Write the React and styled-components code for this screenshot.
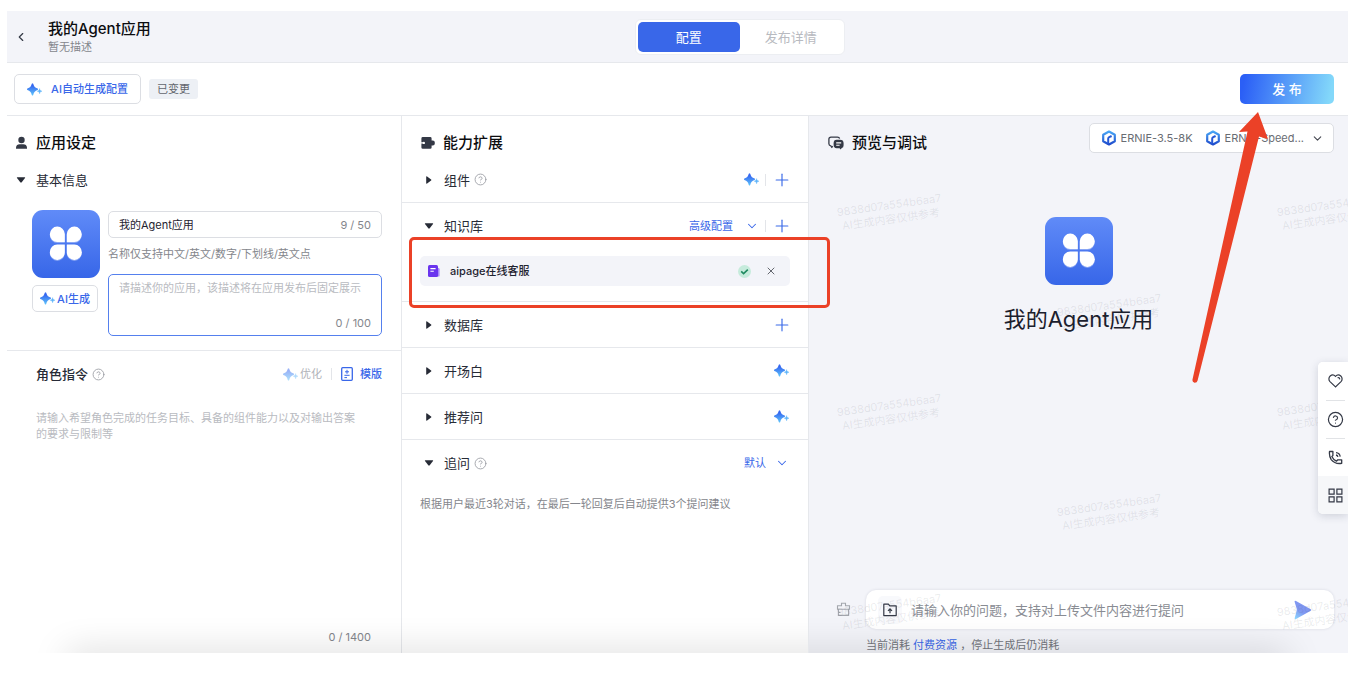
import React from "react";
import styled, { createGlobalStyle, css } from "styled-components";
import { Plus, ChevronDown, ChevronLeft, X, CircleHelp } from "lucide-react";

const GlobalStyle = createGlobalStyle`
  * {
    box-sizing: border-box;
  }
  body {
    margin: 0;
    background: #fff;
    color: #1f2330;
    font-family: Inter, "Noto Sans CJK SC", sans-serif;
    font-size: 11px;
    line-height: 16px;
  }
  button, input, textarea, select {
    margin: 0;
    padding: 0;
    border: 0;
    background: none;
    color: inherit;
    font: inherit;
    outline: none;
  }
  button, select {
    cursor: pointer;
  }
  h1, h2, h3, p {
    margin: 0;
  }
  svg {
    display: block;
    flex: none;
  }
`;

const Page = styled.div`
  position: relative;
  display: flex;
  min-height: 100vh;
  padding: 11px 24px 25px 7px;
`;

const Shell = styled.div`
  position: relative;
  display: flex;
  flex: 1;
  flex-direction: column;
  min-width: 0;
  overflow: hidden;
`;

const Header = styled.header`
  display: grid;
  grid-template-columns: 629fr auto 504fr;
  align-items: center;
  height: 52px;
  background: #f3f4f9;
  border-bottom: 1px solid #e6e8ec;
`;

const Brand = styled.div`
  display: flex;
  align-items: center;
  gap: 20px;
  padding-left: 7px;
`;

const IconButton = styled.button`
  display: flex;
  align-items: center;
  justify-content: center;
  color: ${(props) => props.$color || "#3b6be8"};
`;

const AppName = styled.h1`
  font-size: 15px;
  font-weight: 500;
  line-height: 20px;
  color: #0c0d10;
`;

const Muted = styled.p`
  color: #84868c;
`;

const Tabs = styled.nav`
  display: flex;
  padding: 2px;
  background: #fff;
  border: 1px solid #eceef2;
  border-radius: 6px;
`;

const Tab = styled.button`
  width: 102px;
  height: 30px;
  border-radius: 5px;
  font-size: 13px;
  color: ${(props) => (props.$active ? "#fff" : "#b8bac0")};
  background: ${(props) => (props.$active ? "#3967e9" : "transparent")};
`;

const Toolbar = styled.div`
  display: flex;
  align-items: center;
  gap: 8px;
  height: 53px;
  padding: 0 14px 0 7px;
  border-bottom: 1px solid #e6e8ec;
`;

const OutlineButton = styled.button`
  display: flex;
  align-items: center;
  justify-content: center;
  gap: ${(props) => (props.$small ? "2px" : "9px")};
  width: ${(props) => (props.$small ? "66px" : "127px")};
  height: ${(props) => (props.$small ? "27px" : "30px")};
  border: 1px solid #dcdee3;
  border-radius: 5px;
  color: #3967e9;
  font-weight: 500;
`;

const Tag = styled.span`
  padding: 2px 8px;
  border-radius: 3px;
  background: #edf0f5;
  color: #63666d;
`;

const PublishButton = styled.button`
  width: 94px;
  height: 30px;
  margin-left: auto;
  border-radius: 5px;
  background: linear-gradient(100deg, #2b5ff6 5%, #83d8fa 95%);
  color: #fff;
  font-size: 13px;
  font-weight: 500;
  white-space: pre;
`;

const Columns = styled.main`
  display: grid;
  flex: 1;
  grid-template-columns: 395fr 407fr 539fr;
`;

const Column = styled.section`
  display: flex;
  flex-direction: column;
  min-width: 0;
  border-right: 1px solid #e6e8ec;
`;

const ColumnTitle = styled.h2`
  display: flex;
  align-items: center;
  gap: 8px;
  height: 41px;
  padding: 12px 0 0 ${(props) => props.$indent || "8px"};
  font-size: 15px;
  font-weight: 500;
  color: #0c0d10;
`;

const Row = styled.div`
  display: flex;
  align-items: center;
  height: 46px;
  padding: 0 19px 0 ${(props) => props.$indent || "21px"};
  ${(props) =>
    props.$line &&
    css`
      border-bottom: 1px solid #e6e8ec;
    `}
`;

const RowTitle = styled.h3`
  display: flex;
  align-items: center;
  gap: 4px;
  margin-right: auto;
  font-size: 13px;
  font-weight: ${(props) => (props.$strong ? 500 : 400)};
  color: #272b36;
`;

const Toggle = styled.button`
  display: flex;
  align-items: center;
  justify-content: center;
  width: 12px;
  height: 16px;
  margin-right: 9px;
`;

const Divider = styled.span`
  width: 1px;
  height: 12px;
  margin: 0 ${(props) => props.$gap || "9px"};
  background: #e3e5e9;
`;

const LinkButton = styled.button`
  display: flex;
  align-items: center;
  gap: ${(props) => props.$gap || "12px"};
  color: ${(props) => (props.$faded ? "#b0b2b8" : "#3967e9")};
  font-weight: ${(props) => (props.$strong ? 500 : 400)};
`;

const SelectWrap = styled.label`
  display: flex;
  align-items: center;
  gap: 9px;
  color: #3967e9;
`;

const PlainSelect = styled.select`
  appearance: none;
`;

const BasicInfo = styled.div`
  display: flex;
  gap: 8px;
  padding: 7px 19px 14px 25px;
  border-bottom: 1px solid #e6e8ec;
`;

const IconStack = styled.div`
  display: flex;
  flex-direction: column;
  gap: 7px;
`;

const Fields = styled.div`
  display: flex;
  flex: 1;
  flex-direction: column;
  min-width: 0;
  padding-top: 1px;
`;

const Field = styled.div`
  display: flex;
  flex-direction: ${(props) => (props.$tall ? "column" : "row")};
  align-items: ${(props) => (props.$tall ? "stretch" : "center")};
  height: ${(props) => (props.$tall ? "62px" : "27px")};
  padding: ${(props) => (props.$tall ? "5px 10px 4px" : "0 10px")};
  border: 1px solid ${(props) => (props.$tall ? "#5580ee" : "#dcdee3")};
  border-radius: 5px;
`;

const TextInput = styled.input`
  flex: 1;
  min-width: 0;
  font-size: ${(props) => props.$size || "11px"};
  &::placeholder {
    color: #898c93;
  }
`;

const TextArea = styled.textarea`
  flex: 1;
  min-height: 0;
  resize: none;
  &::placeholder {
    color: #b9bbc1;
  }
`;

const Counter = styled.span`
  align-self: ${(props) => (props.$end ? "flex-end" : "auto")};
  color: #84868c;
`;

const Hint = styled.p`
  padding: 8px 0 12px;
  color: #84868c;
`;

const Role = styled.div`
  display: flex;
  flex: 1;
  flex-direction: column;
  padding: 13px 40px 8px 29px;
`;

const RoleCounter = styled(Counter)`
  align-self: flex-end;
  margin-right: -10px;
`;

const Knowledge = styled.div`
  padding: 7px 18px 15px;
  border-bottom: 1px solid #e6e8ec;
`;

const KnowledgeItem = styled.div`
  display: flex;
  align-items: center;
  gap: 10px;
  height: 30px;
  padding: 0 13px 0 8px;
  border-radius: 5px;
  background: #f3f4f9;
  font-weight: 500;
`;

const ItemActions = styled.div`
  display: flex;
  align-items: center;
  gap: 14px;
  margin-left: auto;
`;

const Note = styled.p`
  padding: 10px 18px;
  color: #84868c;
`;

const Preview = styled.section`
  position: relative;
  display: flex;
  flex-direction: column;
  min-width: 0;
  overflow: hidden;
  background: #f3f4f9;
`;

const PreviewTop = styled.div`
  display: flex;
  align-items: flex-start;
  justify-content: space-between;
  padding-right: 14px;
`;

const ModelPicker = styled.button`
  display: flex;
  align-items: center;
  gap: 12px;
  height: 30px;
  margin-top: 7px;
  padding: 0 9px 0 11px;
  border: 1px solid #dcdee3;
  border-radius: 5px;
  background: #fff;
  color: #696c73;
  > svg {
    margin-left: -5px;
  }
`;

const Model = styled.span`
  display: flex;
  align-items: center;
  gap: 4px;
`;

const Welcome = styled.div`
  display: flex;
  flex: 1;
  flex-direction: column;
  align-items: center;
  gap: 18px;
  padding-top: 60px;
`;

const WelcomeName = styled.p`
  font-size: 22px;
  line-height: 32px;
  color: #1b202d;
`;

const Composer = styled.form`
  display: flex;
  align-items: center;
  gap: 15px;
  padding: 0 14px 0 27px;
`;

const InputCard = styled.div`
  display: flex;
  flex: 1;
  align-items: center;
  gap: 9px;
  height: 39px;
  padding: 0 22px 0 12px;
  border-radius: 10px;
  background: #fff;
  box-shadow: 0 0 3px rgba(40, 50, 80, 0.14);
`;

const UploadButton = styled(IconButton)`
  width: 24px;
  height: 28px;
  border-radius: 5px;
  background: #f8f9fc;
`;

const Cost = styled.p`
  padding: 8px 0 0 57px;
  color: #72757c;
  a {
    color: #3967e9;
    text-decoration: none;
  }
`;

// tiled marks float above the chat area
const Watermarks = styled.div`
  position: absolute;
  inset: 46px -60px 0 -1px;
  display: grid;
  grid-template-columns: 220px 220px 220px;
  grid-auto-rows: 100px;
  overflow: hidden;
  pointer-events: none;
`;

const Mark = styled.div`
  grid-row: ${(props) => props.$row};
  grid-column: ${(props) => props.$col};
  align-self: center;
  width: 164px;
  text-align: center;
  line-height: 14px;
  color: rgba(60, 66, 84, 0.11);
  transform: rotate(-8deg);
`;

const Dock = styled.aside`
  position: absolute;
  top: 246px;
  right: 0;
  width: 30px;
  border-radius: 5px 0 0 5px;
  overflow: hidden;
  background: #fff;
  box-shadow: 0 2px 8px rgba(40, 50, 80, 0.18);
`;

const DockButton = styled(IconButton)`
  width: 100%;
  height: 38px;
  padding-left: 5px;
  background: ${(props) => (props.$shaded ? "#f6f7f9" : "#fff")};
`;

const DockLine = styled.hr`
  position: relative;
  height: 1px;
  margin: 0 3px -1px 8px;
  border: 0;
  background: #e1e3e6;
`;

const BottomShade = styled.div`
  position: absolute;
  right: 60px;
  bottom: -20px;
  left: 60px;
  height: 20px;
  box-shadow: 0 0 36px rgba(0, 0, 0, 0.18);
  pointer-events: none;
`;

const HighlightBox = styled.div`
  position: absolute;
  top: 121px;
  left: 7px;
  right: -22px;
  height: 71px;
  border: 3px solid #eb4127;
  border-radius: 5px;
  pointer-events: none;
`;

const MiddleColumn = styled(Column)`
  position: relative;
  z-index: 1;
`;

const Arrow = styled.svg`
  position: absolute;
  top: 112px;
  right: 102px;
  z-index: 2;
  pointer-events: none;
`;

const Sparkle = ({ faded }) => (
  <svg width="15" height="13" viewBox="0 0 15 13" opacity={faded ? 0.5 : 1}>
    <defs>
      <linearGradient id="sparkle" x1="0" y1="0" x2="0" y2="1">
        <stop offset="0.2" stopColor="#3567f0" />
        <stop offset="1" stopColor="#5fc4fb" />
      </linearGradient>
    </defs>
    <path
      d="M4.8.7Q5.5-.4 6.2.7C7 3.6 8 4.6 10.6 5.6Q11.6 6.3 10.6 7C8 8 7 9 6.2 11.900Q5.5 13 4.800 11.900C4 9 3 8 .4 7Q-.6 6.3 .4 5.600C3 4.600 4 3.600 4.800.7Z"
      fill="url(#sparkle)"
    />
    <path
      d="M12.6 5.6C12.9 7.3 13.3 7.900 15 8.200C13.300 8.500 12.900 9.100 12.600 10.800C12.300 9.100 11.900 8.500 10.200 8.200C11.900 7.900 12.300 7.300 12.600 5.600Z"
      fill="#61b5fa"
      stroke="#61b5fa"
      strokeWidth="0.4"
    />
  </svg>
);

const Caret = ({ open }) => (
  <svg width="10" height="10" viewBox="0 0 10 10" fill="#272b36">
    {open ? (
      <path d="M1.4 2.2h7.2q1 0 .4.8L5.7 7.3q-.7.8-1.4 0L1 3q-.6-.8.4-.8Z" />
    ) : (
      <path d="M2.2 1.9q0-1.1.9-.4l4 3q.7.5 0 1l-4 3q-.9.7-.9-.4Z" />
    )}
  </svg>
);

const Clover = () => (
  <svg width="68" height="68" viewBox="0 0 68 68">
    <defs>
      <linearGradient id="tile" x1="0" y1="0" x2="0" y2="1">
        <stop offset="0" stopColor="#608bf8" />
        <stop offset="1" stopColor="#3766e8" />
      </linearGradient>
    </defs>
    <rect width="68" height="68" rx="11" fill="url(#tile)" />
    <g fill="#fff" fillOpacity="0.35" transform="translate(0 1)">
      <path d="M32.8 32H25.2A7.5 7.7 0 1 1 32.8 24Z" />
      <path d="M34.8 32h7.6A7.5 7.7 0 1 0 34.8 24Z" />
      <path d="M32.8 34.500H25.200A7.500 7.700 0 1 0 32.800 42.500Z" />
      <path d="M34.800 34.500h7.600A7.500 7.700 0 1 1 34.800 42.500Z" />
    </g>
    <g fill="#fff">
      <path d="M32.8 32H25.2A7.5 7.7 0 1 1 32.8 24Z" />
      <path d="M34.8 32h7.6A7.5 7.7 0 1 0 34.8 24Z" />
      <path d="M32.8 34.500H25.200A7.500 7.700 0 1 0 32.800 42.500Z" />
      <path d="M34.800 34.500h7.600A7.500 7.700 0 1 1 34.800 42.500Z" />
    </g>
  </svg>
);

const UserIcon = () => (
  <svg width="13" height="14" viewBox="0 0 13 14" fill="#343946">
    <circle cx="6.5" cy="4" r="3.2" />
    <path d="M1 12.8V11.6C1 9.4 2.8 8.2 4.6 8.2h3.8c1.8 0 3.6 1.2 3.6 3.4v1.2Z" />
  </svg>
);

const PuzzleIcon = () => (
  <svg width="14" height="14" viewBox="0 0 14 14">
    <path
      d="M1.8 1h7.4q1.400 0 1.400 1.400v2h1.200q2 0 2 2v1.200q0 2-2 2h-1.200v2q0 1.200-1.400 1.200H1.800Q.4 12.800.4 11.600V2.400Q.4 1 1.800 1Z"
      fill="#343946"
    />
    <circle cx="2.8" cy="6.900" r="1.200" fill="#fff" />
    <path d="M0 6.300h2.800v1.200H0Z" fill="#fff" />
  </svg>
);

const ChatIcon = () => (
  <svg width="16" height="14" viewBox="0 0 16 14" fill="none">
    <path
      d="M4.800 10.200L3.800 11.300L2.800 9.800Q.9 9.600.9 7.800V3.300Q.9 1.200 3 1.200h6.400q1.900 0 2.200 1.500"
      stroke="#343946"
      strokeWidth="1.3"
    />
    <path
      d="M8.600 3.800h3.400Q15.600 3.800 15.600 7.200v2Q15.600 11.600 13.800 12L12.600 13.400L11.600 12.200H8.600Q5.600 12.200 5.600 8.800V7.200Q5.600 3.800 8.600 3.800Z"
      fill="#343946"
    />
    <path d="M8.200 6.900h5M8.200 9.300h3.400" stroke="#fff" strokeWidth="1.1" />
  </svg>
);

const TemplateIcon = () => (
  <svg width="12" height="14" viewBox="0 0 12 14" fill="none" stroke="#3967e9">
    <rect x=".7" y=".7" width="10.6" height="12.6" rx="1" strokeWidth="1.3" />
    <path d="M6 2.8v4M4 4.8h4M3.4 8.3h5.2M3.4 10.6h2.6" />
  </svg>
);

const DocIcon = () => (
  <svg width="12" height="12" viewBox="0 0 12 12">
    <path d="M8 3h2.4q1.2 0 1.2 1.2v6.2q0 1.2-1.2 1.2H8Z" fill="#a98bf8" />
    <rect width="10" height="12" rx="1.5" fill="#6a34ee" />
    <path d="M2.4 3.6h5.2M2.4 6.2h3.4" stroke="#fff" strokeWidth="1.1" />
  </svg>
);

const DoneIcon = () => (
  <svg width="13" height="13" viewBox="0 0 13 13">
    <circle cx="6.5" cy="6.5" r="6.5" fill="#c6ebdc" />
    <path d="M3.2 6.4l2.4 2.3l4.2-4" fill="none" stroke="#1f8a60" strokeWidth="1.6" />
  </svg>
);

const ErnieIcon = () => (
  <svg width="16" height="16" viewBox="0 0 16 16" fill="none">
    <defs>
      <linearGradient id="ernie" x1="0" y1="0" x2="0" y2="1">
        <stop offset="0" stopColor="#48a5f5" />
        <stop offset="1" stopColor="#1f4ccc" />
      </linearGradient>
    </defs>
    <path
      d="M8 1.5L13.800 4.800V11.200L8 14.500L2.200 11.200V4.800Z"
      stroke="url(#ernie)"
      strokeWidth="2.2"
      strokeLinejoin="round"
    />
    <path d="M7.200 13.600V8.800Q7.200 7.700 8.200 7.200L10.600 6" stroke="#2558d6" strokeWidth="2" />
  </svg>
);

const BroomIcon = () => (
  <svg width="15" height="15" viewBox="0 0 15 15" fill="none" stroke="#a3a6ad" strokeWidth="1.1">
    <path d="M5.5 3.8V1.3h4v2.5h4v3.400h-12V3.800ZM2.400 7.200v6.200h10.200V7.200M2.400 10.400h2" />
  </svg>
);

const FolderUpIcon = () => (
  <svg width="14" height="14" viewBox="0 0 14 14" fill="none" stroke="#343946" strokeWidth="1.2">
    <path d="M.8 12.6V1.2h4.6l1.4 1.7h6.4v9.7Z" strokeLinejoin="round" />
    <path d="M7 10.2V6.2M5 7.8L7 5.8l2 2" />
  </svg>
);

const SendIcon = () => (
  <svg width="18" height="20" viewBox="0 0 18 20">
    <defs>
      <linearGradient id="send" x1="0.4" y1="0.4" x2="0" y2="1">
        <stop offset="0.2" stopColor="#8097f1" />
        <stop offset="1" stopColor="#8edcff" />
      </linearGradient>
    </defs>
    <path
      d="M.6 1.8Q.4.2 2 1L16.8 9.2Q18 10 16.8 10.8L2 19Q.3 19.8.7 18L2.6 11.2Q2.9 10 2.7 8.8Z"
      fill="url(#send)"
    />
  </svg>
);

const HeartIcon = () => (
  <svg width="15" height="14" viewBox="0 0 15 14" fill="none" stroke="#343946" strokeWidth="1.2">
    <path d="M7.5 12.9L2 7.6A3.9 3.9 0 0 1 2.2 2C3.8.6 6.1.8 7.5 2.3C8.9.8 11.2.6 12.8 2A3.9 3.9 0 0 1 13 7.6Z" />
    <path d="M9.6 3.6q1.8-.4 2.2 1.7" />
  </svg>
);

const PhoneIcon = () => (
  <svg width="15" height="15" viewBox="0 0 15 15" fill="none" stroke="#343946" strokeWidth="1.3">
    <path
      d="M1.500 1.500h3.400v4L3.800 6.600Q5.200 9.600 8.400 11.200L9.800 9.800h3.900v3.500Q7 14.400 3.200 9.600Q1 6.200 1.500 1.500Z"
      strokeLinejoin="round"
    />
    <path d="M8 2.700q3.700.3 4.200 4M8 5q1.600.3 1.900 1.900" />
  </svg>
);

const GridIcon = () => (
  <svg width="15" height="15" viewBox="0 0 15 15" fill="none" stroke="#343946" strokeWidth="1.2">
    <path d="M1.1 1.1h5v5h-5ZM8.9 1.1h5v5h-5ZM1.1 8.9h5v5h-5ZM8.9 8.9h5v5h-5Z" />
  </svg>
);

const Help = () => <CircleHelp size={13} strokeWidth={1.6} color="#9a9da4" />;
const Down = () => <ChevronDown size={14} strokeWidth={1.8} />;

const PlusButton = styled(IconButton)`
  margin-right: -3px;
`;

const AddButton = () => (
  <PlusButton aria-label="添加">
    <Plus size={20} strokeWidth={1.4} />
  </PlusButton>
);

const SparkleButton = () => (
  <IconButton aria-label="AI生成">
    <Sparkle />
  </IconButton>
);

const Group = ({ title, help, open, line, children }) => (
  <Row $line={line}>
    <Toggle aria-label={title} aria-expanded={!!open}>
      <Caret open={open} />
    </Toggle>
    <RowTitle>
      {title}
      {help && <Help />}
    </RowTitle>
    {children}
  </Row>
);

const marks = [
  [1, 1],
  [1, 3],
  [2, 2],
  [3, 1],
  [3, 3],
  [4, 2],
  [5, 1],
  [5, 3],
];

function SettingsColumn() {
  return (
    <Column>
      <ColumnTitle>
        <UserIcon />
        应用设定
      </ColumnTitle>
      <Row $indent="8px">
        <Toggle aria-label="基本信息" aria-expanded>
          <Caret open />
        </Toggle>
        <RowTitle>基本信息</RowTitle>
      </Row>
      <BasicInfo>
        <IconStack>
          <Clover />
          <OutlineButton $small>
            <Sparkle />
            AI生成
          </OutlineButton>
        </IconStack>
        <Fields>
          <Field>
            <TextInput aria-label="应用名称" defaultValue="我的Agent应用" />
            <Counter>9 / 50</Counter>
          </Field>
          <Hint>名称仅支持中文/英文/数字/下划线/英文点</Hint>
          <Field $tall>
            <TextArea
              aria-label="应用描述"
              placeholder="请描述你的应用，该描述将在应用发布后固定展示"
            />
            <Counter $end>0 / 100</Counter>
          </Field>
        </Fields>
      </BasicInfo>
      <Row $indent="29px">
        <RowTitle $strong>
          角色指令
          <Help />
        </RowTitle>
        <LinkButton $faded $gap="2px">
          <Sparkle faded />
          优化
        </LinkButton>
        <Divider />
        <LinkButton $strong $gap="7px">
          <TemplateIcon />
          模版
        </LinkButton>
      </Row>
      <Role>
        <TextArea
          aria-label="角色指令"
          placeholder="请输入希望角色完成的任务目标、具备的组件能力以及对输出答案的要求与限制等"
        />
        <RoleCounter>0 / 1400</RoleCounter>
      </Role>
    </Column>
  );
}

function AbilityColumn() {
  return (
    <MiddleColumn>
      <ColumnTitle $indent="19px">
        <PuzzleIcon />
        能力扩展
      </ColumnTitle>
      <Group title="组件" help line>
        <SparkleButton />
        <Divider $gap="6px" />
        <AddButton />
      </Group>
      <Group title="知识库" open>
        <LinkButton>
          高级配置
          <Down />
        </LinkButton>
        <Divider $gap="6px" />
        <AddButton />
      </Group>
      <Knowledge>
        <KnowledgeItem>
          <DocIcon />
          aipage在线客服
          <ItemActions>
            <DoneIcon />
            <IconButton $color="#54575f" aria-label="移除">
              <X size={12} strokeWidth={1.8} />
            </IconButton>
          </ItemActions>
        </KnowledgeItem>
      </Knowledge>
      <Group title="数据库" line>
        <AddButton />
      </Group>
      <Group title="开场白" line>
        <SparkleButton />
      </Group>
      <Group title="推荐问" line>
        <SparkleButton />
      </Group>
      <Group title="追问" help open>
        <SelectWrap>
          <PlainSelect aria-label="追问">
            <option>默认</option>
          </PlainSelect>
          <Down />
        </SelectWrap>
      </Group>
      <Note>根据用户最近3轮对话，在最后一轮回复后自动提供3个提问建议</Note>
      <HighlightBox />
    </MiddleColumn>
  );
}

function PreviewColumn() {
  return (
    <Preview>
      <PreviewTop>
        <ColumnTitle $indent="19px">
          <ChatIcon />
          预览与调试
        </ColumnTitle>
        <ModelPicker aria-haspopup="listbox">
          <Model>
            <ErnieIcon />
            ERNIE-3.5-8K
          </Model>
          <Model>
            <ErnieIcon />
            ERNIE-Speed...
          </Model>
          <ChevronDown size={13} strokeWidth={2} color="#444750" />
        </ModelPicker>
      </PreviewTop>
      <Welcome>
        <Clover />
        <WelcomeName>我的Agent应用</WelcomeName>
      </Welcome>
      <Composer>
        <IconButton type="button" aria-label="清空">
          <BroomIcon />
        </IconButton>
        <InputCard>
          <UploadButton type="button" aria-label="上传文件">
            <FolderUpIcon />
          </UploadButton>
          <TextInput
            $size="13px"
            aria-label="问题"
            placeholder="请输入你的问题，支持对上传文件内容进行提问"
          />
          <IconButton type="button" aria-label="发送">
            <SendIcon />
          </IconButton>
        </InputCard>
      </Composer>
      <Cost>
        当前消耗 <a href="#cost">付费资源</a> ，停止生成后仍消耗
      </Cost>
      <Watermarks>
        {marks.map(([row, col]) => (
          <Mark key={`${row}-${col}`} $row={row} $col={col}>
            9838d07a554b6aa7
            <br />
            AI生成内容仅供参考
          </Mark>
        ))}
      </Watermarks>
      <Dock>
        <DockButton $color="#343946" aria-label="收藏">
          <HeartIcon />
        </DockButton>
        <DockLine />
        <DockButton $color="#343946" aria-label="帮助">
          <CircleHelp size={17} strokeWidth={1.7} />
        </DockButton>
        <DockLine />
        <DockButton $color="#343946" aria-label="电话">
          <PhoneIcon />
        </DockButton>
        <DockButton $shaded $color="#343946" aria-label="更多">
          <GridIcon />
        </DockButton>
      </Dock>
    </Preview>
  );
}

export default function App() {
  return (
    <Page>
      <GlobalStyle />
      <Shell>
        <Header>
          <Brand>
            <IconButton $color="#343946" aria-label="返回">
              <ChevronLeft size={14} strokeWidth={2} />
            </IconButton>
            <div>
              <AppName>我的Agent应用</AppName>
              <Muted>暂无描述</Muted>
            </div>
          </Brand>
          <Tabs>
            <Tab $active>配置</Tab>
            <Tab>发布详情</Tab>
          </Tabs>
        </Header>
        <Toolbar>
          <OutlineButton>
            <Sparkle />
            AI自动生成配置
          </OutlineButton>
          <Tag>已变更</Tag>
          <PublishButton>发 布</PublishButton>
        </Toolbar>
        <Columns>
          <SettingsColumn />
          <AbilityColumn />
          <PreviewColumn />
        </Columns>
        <BottomShade />
      </Shell>
      <Arrow width="78" height="272" viewBox="0 0 78 272">
        <path
          d="M66 0L76 27L67 24.500L5.600 268.500Q5 271 2.500 270.800Q0 270.300.5 267.500L55.500 19.500L47 20Z"
          fill="#eb4127"
        />
      </Arrow>
    </Page>
  );
}
